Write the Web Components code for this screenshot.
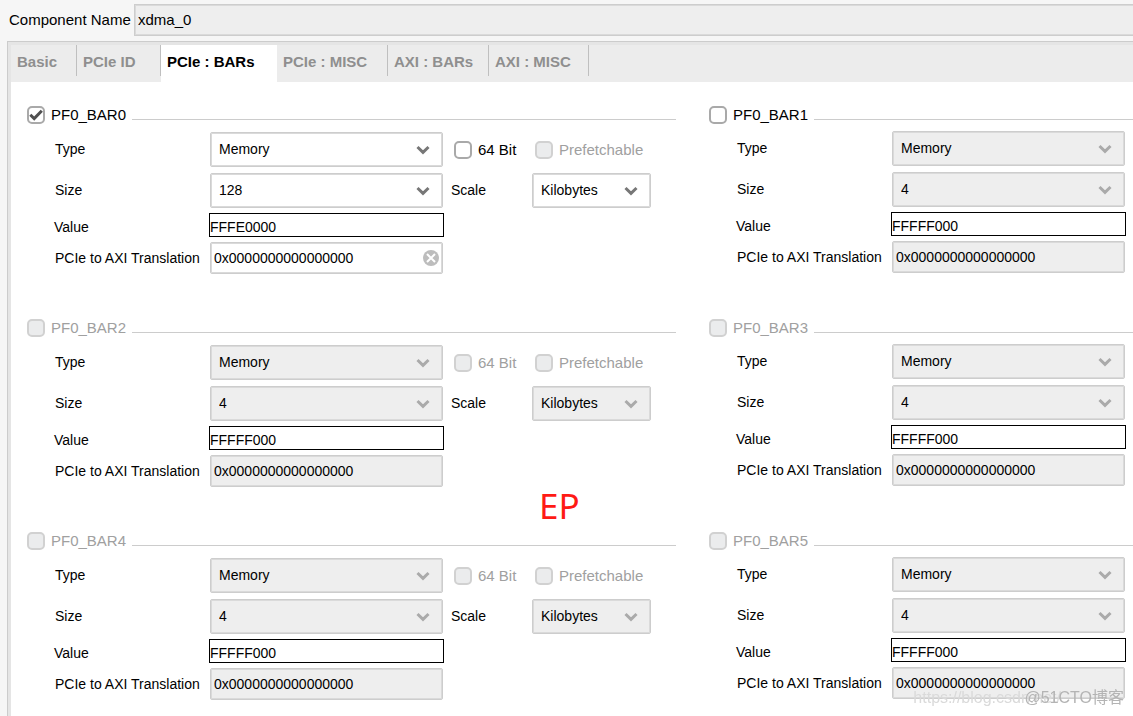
<!DOCTYPE html>
<html lang="en">
<head>
<meta charset="utf-8">
<title>Component settings</title>
<style>
  html { height: 100%; overflow: hidden; }
  body {
    margin: 0; min-height: 100%; overflow: hidden;
    background: #f6f6f6; color: #000;
    font: 14px/18px "Liberation Sans", Arial, sans-serif;
  }
</style>
</head>
<body>
<config-page></config-page>
<script>
const define = (name, html, setup) => {
  customElements.define(name, class extends HTMLElement {
    connectedCallback() {
      if (this.shadowRoot) return;
      const root = this.attachShadow({ mode: "open" });
      const t = document.createElement("template");
      t.innerHTML = html;
      root.append(t.content.cloneNode(true));
      if (setup) setup(this, root);
    }
  });
};

/* Tick box with its caption */
define("check-box", `
<style>
  :host { display: block; font-size: 15px; }
  label { display: grid; grid-template-columns: 18px auto; column-gap: 6px; align-items: center; white-space: nowrap; }
  input {
    appearance: none; box-sizing: border-box; width: 18px; height: 18px; margin: 0; grid-area: 1 / 1;
    border: 2px solid #a9a9a9; border-radius: 5px; background: #fff;
  }
  svg { grid-area: 1 / 1; width: 18px; height: 18px; visibility: hidden; pointer-events: none; z-index: 1; }
  input:checked + svg { visibility: visible; }
  input:disabled { background: #ebeced; border-color: #d1d1d1; }
  input:disabled ~ span { color: #a0a0a0; }
</style>
<label><input type="checkbox"><svg viewBox="0 0 18 18" aria-hidden="true"><path d="M3.300 8.800 7.200 12.600 14.800 4.800" fill="none" stroke="#505050" stroke-width="3"/></svg><span><slot></slot></span></label>`,
(host, root) => {
  const i = root.querySelector("input");
  i.checked = host.hasAttribute("checked");
  i.disabled = host.hasAttribute("disabled");
});

/* Labelled drop-down */
define("drop-field", `
<style>
  :host { display: block; }
  .row { display: grid; grid-template-columns: var(--label-width, 155px) var(--field-width, 233px); align-items: center; }
  .box { display: grid; align-items: center; }
  label { padding-bottom: 2px; }
  select {
    appearance: none; grid-area: 1 / 1; box-sizing: border-box; width: 100%; height: 35px; margin: 0; padding: 0 30px 2px 8px;
    border: 1px solid #cdcdcd; border-radius: 2px; box-shadow: inset 0 0 0 1px #dadada;
    background: #fff; color: #000; font: inherit; opacity: 1;
  }
  select:disabled { background: #eee; }
  svg { grid-area: 1 / 1; justify-self: end; width: 14px; height: 10px; margin: 0 13px 0 0; pointer-events: none; color: #777; }
  select:disabled + svg { color: #aaa; }
</style>
<div class="row"><label for="f"></label><div class="box"><select id="f"><option></option></select>
<svg viewBox="0 0 14 10" aria-hidden="true"><path d="M1.500 2 7 7.300 12.500 2" fill="none" stroke="currentColor" stroke-width="3"/></svg></div></div>`,
(host, root) => {
  root.querySelector("label").textContent = host.getAttribute("label");
  root.querySelector("option").textContent = host.getAttribute("value");
  root.querySelector("select").disabled = host.hasAttribute("disabled");
});

/* Labelled text box; "plain" draws the read-only value frame, "clearable" adds a reset button */
define("text-field", `
<style>
  :host { display: block; }
  .row { display: grid; grid-template-columns: 155px 233px; align-items: center; }
  .box { display: grid; align-items: center; }
  input {
    grid-area: 1 / 1; box-sizing: border-box; width: 100%; height: 32px; margin: 0; padding: 0 24px 0 3px;
    border: 1px solid #cdcdcd; border-radius: 2px; box-shadow: inset 0 0 0 1px #dadada;
    background: #fff; color: #000; font: inherit;
  }
  input:disabled { background: #eee; }
  button { grid-area: 1 / 1; justify-self: end; width: 16px; height: 16px; margin: 0 4px 0 0; padding: 0; border: 0; background: none; }
  button[hidden] { display: none; }
  svg { display: block; width: 16px; height: 16px; }
  :host([plain]) .row { grid-template-columns: 155px 235px; margin: 0 -1px; }
  :host([plain]) input { height: 24px; padding: 3px 0 0; border: 1px solid #000; border-radius: 0; box-shadow: none; }
  :host([plain]) label { padding-top: 3px; }
</style>
<div class="row"><label for="f"></label><div class="box"><input id="f" type="text">
<button type="button" aria-label="Clear" hidden><svg viewBox="0 0 16 16"><circle cx="8" cy="8" r="8" fill="#bdbdbd"/><path d="M4 4 12 12M12 4 4 12" stroke="#fff" stroke-width="2"/></svg></button></div></div>`,
(host, root) => {
  root.querySelector("label").textContent = host.getAttribute("label");
  const i = root.querySelector("input");
  i.value = host.getAttribute("value");
  i.readOnly = host.hasAttribute("plain");
  i.disabled = host.hasAttribute("disabled");
  const b = root.querySelector("button");
  b.hidden = !host.hasAttribute("clearable");
  b.addEventListener("click", () => { i.value = ""; i.focus(); });
});

/* One base address register: title line plus its settings */
define("bar-group", `
<style>
  :host { display: block; min-width: 0; }
  .title { display: flex; height: 18px; margin-bottom: 8px; }
  :host([compact]) .title { margin-bottom: 7px; }
  .title check-box { flex: 0 0 105px; }
  .line { flex: 1; height: 14px; box-sizing: border-box; border-bottom: 1px solid #ccc; }
  .rows { display: flex; flex-direction: column; gap: 5px; padding-left: 28px; }
  .pair { display: flex; align-items: center; }
  .pair + .pair { padding: 1px 0 0; }
  .flags { display: grid; grid-template-columns: 81px auto; margin-left: 11px; }
  .scale { --label-width: 81px; --field-width: 119px; margin-left: 8px; }
  :host([compact]) .extra { display: none; }
</style>
<div class="title"><check-box class="name"></check-box><div class="line"></div></div>
<div class="rows">
  <div class="pair"><drop-field class="type" label="Type" value="Memory"></drop-field>
    <div class="flags extra"><check-box class="wide">64 Bit</check-box><check-box disabled>Prefetchable</check-box></div></div>
  <div class="pair"><drop-field class="size" label="Size"></drop-field>
    <drop-field class="scale extra" label="Scale" value="Kilobytes"></drop-field></div>
  <text-field class="value" plain label="Value"></text-field>
  <text-field class="axi" label="PCIe to AXI Translation" value="0x0000000000000000"></text-field>
</div>`,
(host, root) => {
  const q = s => root.querySelector(s);
  const on = host.hasAttribute("checked");
  q(".name").textContent = host.getAttribute("name");
  q(".size").setAttribute("value", host.getAttribute("size"));
  q(".value").setAttribute("value", host.getAttribute("value"));
  if (!on) [".type", ".size", ".scale", ".axi", ".wide"].forEach(s => q(s).setAttribute("disabled", ""));
  else { q(".name").setAttribute("checked", ""); q(".axi").setAttribute("clearable", ""); }
  if (host.hasAttribute("locked")) q(".name").setAttribute("disabled", "");
  /* children were upgraded before their attributes were known: rebuild them */
  root.querySelectorAll("check-box, drop-field, text-field").forEach(e => e.replaceWith(e.cloneNode(true)));
});

/* Row of tabs */
define("tab-strip", `
<style>
  :host { display: block; background: #ececec; }
  nav { display: grid; grid-template-columns: 66px 84px 116px 111px 101px 100px; height: 37px; }
  button {
    box-sizing: border-box; height: 31px; margin: 0; padding: 3px 0 0 6px; border: 0; border-right: 1px solid #bfbfbf;
    background: none; color: #8f8f8f; font: bold 15px/18px "Liberation Sans", Arial, sans-serif; text-align: left; white-space: nowrap;
  }
  button[aria-selected=true] { height: 37px; padding-bottom: 6px; border: 0; background: #fff; color: #000; }
</style>
<nav role="tablist">
  <button role="tab">Basic</button><button role="tab">PCIe ID</button><button role="tab" aria-selected="true">PCIe : BARs</button>
  <button role="tab">PCIe : MISC</button><button role="tab">AXI : BARs</button><button role="tab">AXI : MISC</button>
</nav>`);

define("config-page", `
<style>
  :host { display: block; }
  header { display: grid; grid-template-columns: 125px 1fr; align-items: center; padding: 4px 0 5px 9px; font-size: 15px; }
  header input {
    box-sizing: border-box; width: 100%; height: 32px; margin: 0; padding: 0 3px 2px; color: #000; font: inherit;
    border: 1px solid #cdcdcd; border-right: 0; box-shadow: inset 1px 0 #dadada, inset 0 1px #dadada, inset 0 -1px #dadada; background: #eee;
  }
  .panel { margin-left: 7px; border: solid #ccc; border-width: 1px 0 0 1px; }
  .inner { border: solid #e5e5e5; border-width: 3px 0 0 3px; }
  main {
    position: relative; display: grid; grid-template-columns: 649fr 424fr; gap: 45px 33px;
    padding: 24px 0 45px 16px; background: #fff;
  }
  .note { position: absolute; left: 528px; top: 406px; color: #ff1a14; font: 35px/36px "Noto Sans", sans-serif; }
  .mark { position: fixed; right: 9px; bottom: 8px; font: 16px/20px "Liberation Sans", "Noto Sans CJK SC", sans-serif; color: #b4b4b4; white-space: nowrap; pointer-events: none; }
  .blog { right: 72px; color: #dadada; }
</style>
<header><label for="name">Component Name</label><input id="name" type="text" value="xdma_0" readonly></header>
<div class="panel"><div class="inner">
  <tab-strip></tab-strip>
  <main>
    <bar-group name="PF0_BAR0" size="128" value="FFFE0000" checked></bar-group>
    <bar-group name="PF0_BAR1" size="4" value="FFFFF000" compact></bar-group>
    <bar-group name="PF0_BAR2" size="4" value="FFFFF000" locked></bar-group>
    <bar-group name="PF0_BAR3" size="4" value="FFFFF000" compact locked></bar-group>
    <bar-group name="PF0_BAR4" size="4" value="FFFFF000" locked></bar-group>
    <bar-group name="PF0_BAR5" size="4" value="FFFFF000" compact locked></bar-group>
    <div class="note">EP</div>
  </main>
</div></div>
<div class="mark blog">https://blog.csdn.net/</div>
<div class="mark">@51CTO博客</div>`);
</script>
</body>
</html>
